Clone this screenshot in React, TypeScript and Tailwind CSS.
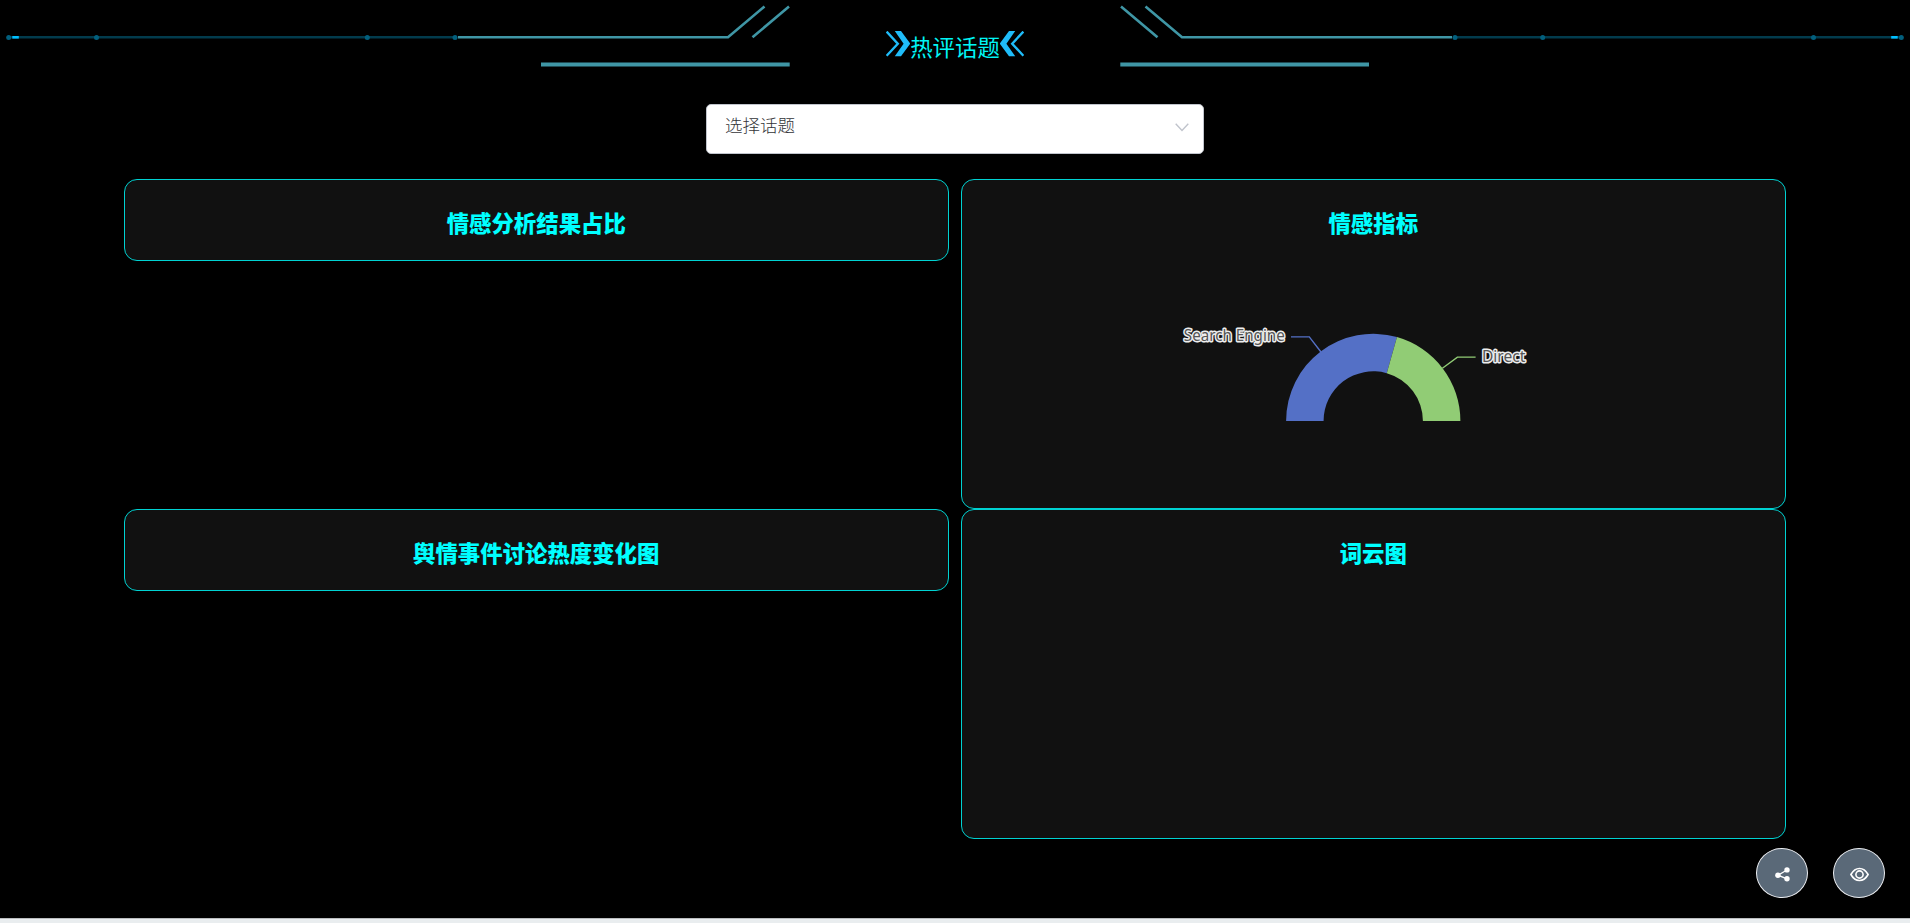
import React from "react";

const OUTER = 87.2;
const INNER = 49.7;
const CX = 411.5;
const CY = 161;

function point(radius: number, degrees: number) {
  const a = (degrees * Math.PI) / 180;
  return `${(CX - radius * Math.cos(a)).toFixed(2)} ${(CY - radius * Math.sin(a)).toFixed(2)}`;
}

function ring(from: number, to: number) {
  return `M${point(OUTER, from)}A${OUTER} ${OUTER} 0 0 1 ${point(OUTER, to)}L${point(INNER, to)}A${INNER} ${INNER} 0 0 0 ${point(INNER, from)}Z`;
}

function Decoration({ mirrored = false }: { mirrored?: boolean }) {
  return (
    <svg
      viewBox="0 0 800 80"
      fill="none"
      className={mirrored ? "h-20 w-[800px] shrink-0 -scale-x-100" : "h-20 w-[800px] shrink-0"}
    >
      <path d="M8 37.3H456" stroke="#023b4d" strokeWidth="2.6" />
      {[8.7, 96.5, 367.3, 455].map((x) => (
        <circle key={x} cx={x} cy="37.4" r="2.5" fill="#025f7d" />
      ))}
      <path d="M12.3 37.3H18.8" stroke="#00bfff" strokeWidth="2.6" />
      <path d="M458 37.3H728L764.5 6.5M752.5 37.3L789 6.5" stroke="#3f96a5" strokeWidth="2.6" />
      <path d="M541 64.6H789.7" stroke="#3f96a5" strokeWidth="4" />
    </svg>
  );
}

function Chevrons({ mirrored = false }: { mirrored?: boolean }) {
  return (
    <svg viewBox="0 0 24 26" fill="none" stroke="#1fbcf9" className={mirrored ? "h-[26px] w-6 -scale-x-100" : "h-[26px] w-6"}>
      <path d="M.6 .6L11.8 12.7L.6 24.8" strokeWidth="2.4" />
      <path d="M8.8 0H15L24.3 12.7L15 25.2H8.8L17.6 12.7Z" fill="#1fbcf9" stroke="none" />
    </svg>
  );
}

function Card({ title, tall = false, children }: { title: string; tall?: boolean; children?: React.ReactNode }) {
  return (
    <section
      className={
        tall
          ? "h-[330px] rounded-[13px] border border-[#00d2d2] bg-[#111]"
          : "mb-[248.5px] h-[81.5px] rounded-[13px] border border-[#00d2d2] bg-[#111]"
      }
    >
      <h2 className="pt-[25px] text-center text-[22.4px] leading-[34px] font-black text-[#0ff]">{title}</h2>
      {children}
    </section>
  );
}

function SentimentChart() {
  return (
    <svg viewBox="0 0 823 240" className="mt-[21px] h-[240px] w-full">
      <path d={ring(0, 105.8)} fill="#5470c6" />
      <path d={ring(105.8, 180)} fill="#91cc75" />
      <path d="M359.2 92L347.5 76.8H329.2" fill="none" stroke="#5470c6" strokeWidth="1.4" />
      <path d="M480.7 108.3L495.7 97.1H513.9" fill="none" stroke="#91cc75" strokeWidth="1.4" />
      <g
        fill="#555"
        stroke="#eee"
        strokeWidth="3"
        strokeLinejoin="round"
        paintOrder="stroke"
        fontSize="16"
        className="font-['Noto_Sans',sans-serif]"
      >
        <text x="222" y="81" textLength="101" lengthAdjust="spacingAndGlyphs">Search Engine</text>
        <text x="520.2" y="102" textLength="43.5" lengthAdjust="spacingAndGlyphs">Direct</text>
      </g>
    </svg>
  );
}

export default function App() {
  return (
    <main className="flex h-[923px] w-[1910px] flex-col overflow-hidden bg-black font-['Noto_Sans_CJK_SC',sans-serif]">
      <header className="flex h-20 justify-between">
        <Decoration />
        <div className="flex items-start pt-[31px]">
          <Chevrons />
          <h1 className="-mt-px text-[22.4px] leading-8 font-normal whitespace-nowrap text-[#00f5f5]">热评话题</h1>
          <Chevrons mirrored />
        </div>
        <Decoration mirrored />
      </header>

      <button className="mx-auto mt-6 flex h-[50px] w-[498px] justify-between rounded-[5px] border border-[#c0c4cc] bg-white pr-[14px] pl-[18px] text-left">
        <span className="pt-[6px] text-[17.5px] leading-7 font-light text-[#333438]">选择话题</span>
        <svg viewBox="0 0 14 9" fill="none" stroke="#c0c4cc" strokeWidth="1.4" className="mt-[18px] h-[9px] w-[14px]">
          <path d="M.7 .8L7 7.4L13.3 .8" />
        </svg>
      </button>

      <div className="mt-[25px] ml-[124px] grid w-[1661.5px] grid-cols-2 items-start gap-x-[12.5px]">
        <Card title="情感分析结果占比" />
        <Card title="情感指标" tall>
          <SentimentChart />
        </Card>
        <Card title="舆情事件讨论热度变化图" />
        <Card title="词云图" tall />
      </div>

      <div className="mt-[9px] flex justify-end gap-[25px] pr-[25px]">
        <button className="flex h-[50px] w-[52px] items-center justify-center rounded-[50%] border border-[#eceef2] bg-[#5a6978]">
          <svg viewBox="0 0 15 15" fill="white" className="mt-[2px] h-[15px] w-[15px]">
            <path d="M12 3L3 8.2L12 11.9" fill="none" stroke="white" strokeWidth="1.4" />
            <circle cx="12" cy="2.9" r="2.7" />
            <circle cx="2.9" cy="8.3" r="2.7" />
            <circle cx="12" cy="11.8" r="2.7" />
          </svg>
        </button>
        <button className="flex h-[50px] w-[52px] items-center justify-center rounded-[50%] border border-[#eceef2] bg-[#5a6978]">
          <svg viewBox="0 0 19 15" fill="none" stroke="white" strokeWidth="1.6" className="mt-[2px] h-[15px] w-[19px]">
            <path d="M.9 7.5C3.2 3.4 6 1.5 9.5 1.5S15.8 3.4 18.1 7.5C15.8 11.6 13 13.5 9.5 13.5S3.2 11.6 .9 7.5Z" />
            <circle cx="9.5" cy="7.5" r="3.6" />
          </svg>
        </button>
      </div>
      <footer className="mt-5 h-[5px] shrink-0 border-t border-[#bbbdbf] bg-[#e9edef]" />
    </main>
  );
}
